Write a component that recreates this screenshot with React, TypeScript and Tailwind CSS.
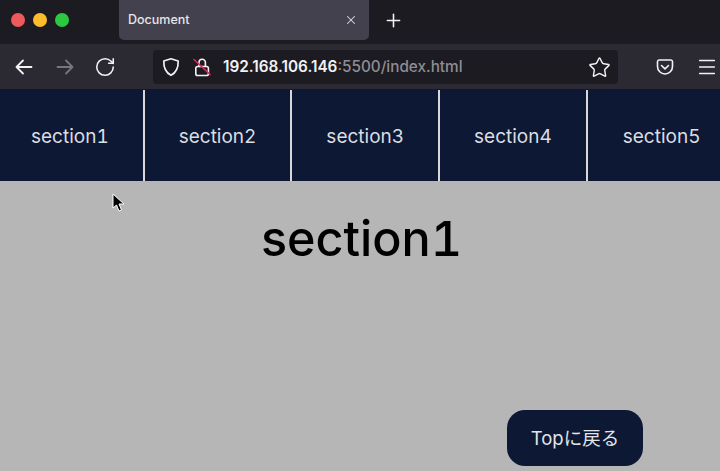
import React from 'react'
import { X, Plus, RotateCw, Star, Menu } from 'lucide-react'

const sections = ['section1', 'section2', 'section3', 'section4', 'section5']

function Arrow({ color, flip }: { color: string; flip?: boolean }) {
  return (
    <svg width="18" height="16" viewBox="0 0 18 16" fill="none" stroke={color} strokeWidth="1.8" strokeLinecap="round" strokeLinejoin="round" className={flip ? '-scale-x-100' : ''}>
      <path d="M1.5 8 H16.5 M8 1.5 L1.5 8 L8 14.5" />
    </svg>
  )
}

function Shield() {
  return (
    <svg width="18" height="20" viewBox="0 0 18 20" fill="none" stroke="#f2f2f4" strokeWidth="1.7" strokeLinejoin="round">
      <path d="M9 1.8 L16.2 4 C16.4 10.5 14.5 15.5 9 18.3 C3.5 15.5 1.6 10.5 1.8 4 Z" />
    </svg>
  )
}

function BrokenLock() {
  return (
    <svg width="18" height="20" viewBox="0 0 18 20" fill="none" strokeLinecap="round">
      <path d="M6 9.5 V5.5 a3.2 3.2 0 0 1 6.4 0 V9.5" stroke="#f2f2f4" strokeWidth="1.6" />
      <rect x="2.8" y="9.5" width="12.6" height="9" rx="1.8" stroke="#f2f2f4" strokeWidth="1.6" />
      <path d="M1 2.5 L17 17.5" stroke="#e22850" strokeWidth="1.6" />
    </svg>
  )
}

function Pocket() {
  return (
    <svg width="18" height="18" viewBox="0 0 18 18" fill="none" stroke="#f2f2f4" strokeWidth="1.6" strokeLinecap="round" strokeLinejoin="round">
      <path d="M3 2 H15 A1.6 1.6 0 0 1 16.5 3.5 V8.5 A7.5 7.5 0 0 1 1.5 8.5 V3.5 A1.6 1.6 0 0 1 3 2 Z" />
      <path d="M5.5 7.5 L9 10.8 L12.5 7.5" />
    </svg>
  )
}

function Cursor() {
  return (
    <svg width="14" height="21" viewBox="0 0 14 21" className="absolute left-[112px] top-[193px]">
      <path d="M1 1 L1 15 L4.5 12 L7 18 L9.5 17 L7 11 L12 11 Z" fill="#000" stroke="#fff" strokeWidth="1" />
    </svg>
  )
}

export default function App() {
  return (
    <div className="relative w-[720px] h-[471px] overflow-hidden flex flex-col bg-[#b6b6b6] font-['Inter','Noto_Sans_CJK_JP',sans-serif] tabular-nums">
      {/* tab bar */}
      <div className="h-[44px] shrink-0 flex bg-[#1c1b22]">
        <div className="flex items-center gap-[8px] pl-[11px] w-[119px] pb-[4px]">
          <span className="w-[14px] h-[14px] rounded-full bg-[#ee5a5c]" />
          <span className="w-[14px] h-[14px] rounded-full bg-[#fdbb2e]" />
          <span className="w-[14px] h-[14px] rounded-full bg-[#2cc840]" />
        </div>
        <div className="w-[250px] h-[40px] rounded-b-[5px] bg-[#42414d] flex items-center justify-between pl-[9px] pr-[11px] text-[12.5px] font-medium text-[#e6e6e8]">
          <span className="pt-[1px]">Document</span>
          <X size={14} strokeWidth={1.8} className="text-[#dcdcde]" />
        </div>
        <div className="ml-[14px] h-[40px] flex items-center">
          <Plus size={21} strokeWidth={1.8} className="text-[#f2f2f4]" />
        </div>
      </div>

      {/* toolbar */}
      <div className="h-[46px] shrink-0 flex items-center bg-[#2b2a33] pl-[15px] pt-[1px] border-b border-[#17171d]">
        <Arrow color="#f2f2f4" />
        <span className="ml-[23px]"><Arrow color="#77767e" flip /></span>
        <RotateCw size={22} strokeWidth={1.7} className="ml-[20px] text-[#f2f2f4]" />
        <div className="ml-[37px] w-[465px] h-[34px] rounded-[4px] bg-[#1c1b22] flex items-center pl-[9px] pr-[7px] normal-nums">
          <Shield />
          <span className="ml-[13px]"><BrokenLock /></span>
          <span className="ml-[12px] text-[15.3px] font-semibold text-[#f2f2f4]">192.168.106.146</span>
          <span className="text-[15.3px] font-medium text-[#8e8d93]">:5500/index.html</span>
          <Star size={23} strokeWidth={1.5} className="ml-auto text-[#f2f2f4]" />
        </div>
        <div className="ml-[38px]"><Pocket /></div>
        <Menu size={22} strokeWidth={1.7} className="ml-[22px] text-[#f2f2f4]" />
      </div>

      {/* section nav */}
      <nav className="h-[91px] shrink-0 flex -ml-[3px] w-[745px] bg-[#0d1835]">
        {sections.map((s, i) => (
          <div
            key={s}
            className={`w-[147.7px] shrink-0 flex items-center justify-center pt-[4px] text-[19px] text-[#dcdde0] ${i < 4 ? 'border-r-2 border-[#d8d8da]' : ''}`}
          >
            {s}
          </div>
        ))}
      </nav>

      {/* content */}
      <main className="flex-1 flex justify-center pl-[3px]">
        <h1 className="mt-[27px] text-[48.5px] leading-[62px] font-medium text-black">section1</h1>
      </main>

      <Cursor />
      <button className="absolute left-[507px] top-[410px] w-[136px] h-[56px] rounded-[18px] bg-[#0d1835] pt-[1px] text-[18.5px] text-[#e2e3e6]">
        Topに戻る
      </button>
    </div>
  )
}
